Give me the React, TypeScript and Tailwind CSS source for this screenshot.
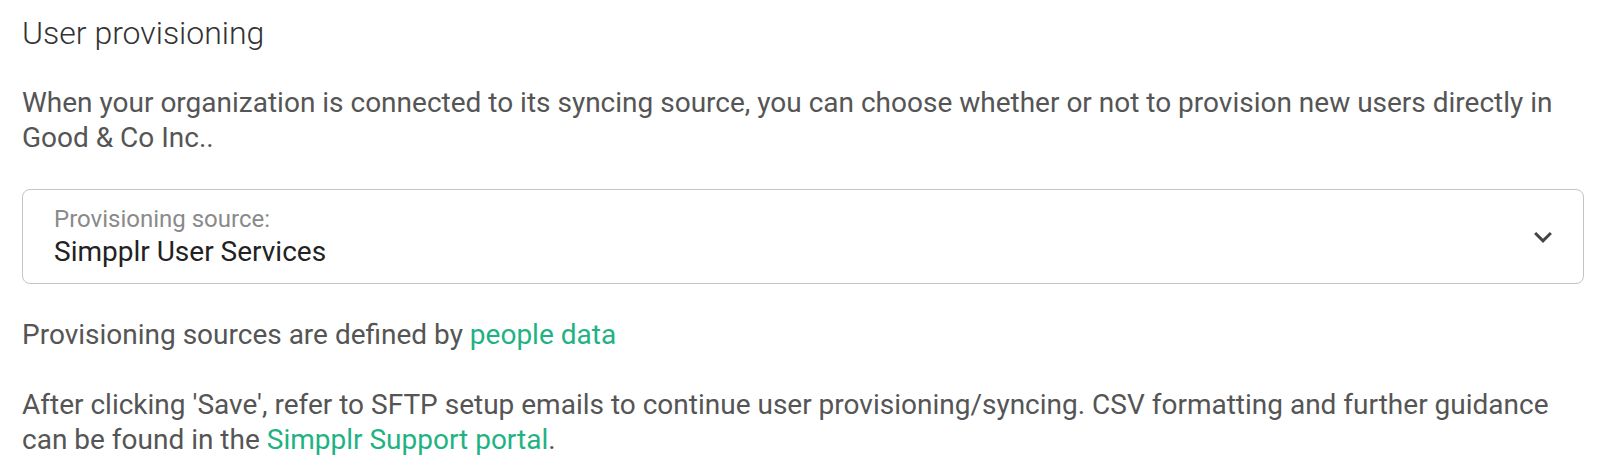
import React from 'react';

const App: React.FC = () => {
  return (
    <div className="w-[1604px] h-[470px] bg-white pl-[22px] pr-[20px] pt-[13px] font-['Roboto',sans-serif] text-[28px] leading-[35px] text-[#555555]">
      <h2 className="text-[32px] leading-[40px] font-light text-[#333333]">User provisioning</h2>

      <p className="mt-[32px]">
        When your organization is connected to its syncing source, you can choose whether or not to provision new users
        directly in Good &amp; Co Inc..
      </p>

      <div className="mt-[34px] w-[1562px] h-[95px] rounded-[8px] border border-[#c4c4c4] flex items-center pl-[31px] pr-[31px]">
        <div className="flex-1 flex flex-col">
          <span className="text-[24px] leading-[28px] text-[#8a8a8a]">Provisioning source:</span>
          <span className="mt-[2px] text-[28px] leading-[34px] text-[#222222]">Simpplr User Services</span>
        </div>
        <svg width="18" height="11" viewBox="6 8.59 12 7.41" className="text-[#444444] mt-[2px]" fill="currentColor">
          <path d="M16.59 8.59L12 13.17 7.41 8.59 6 10l6 6 6-6z" />
        </svg>
      </div>

      <p className="mt-[33px]">
        Provisioning sources are defined by <a className="text-[#1fb283]">people data</a>
      </p>

      <p className="mt-[35px]">
        After clicking 'Save', refer to SFTP setup emails to continue user provisioning/syncing. CSV formatting and
        further guidance can be found in the <a className="text-[#1fb283]">Simpplr Support portal</a>.
      </p>
    </div>
  );
};

export default App;
